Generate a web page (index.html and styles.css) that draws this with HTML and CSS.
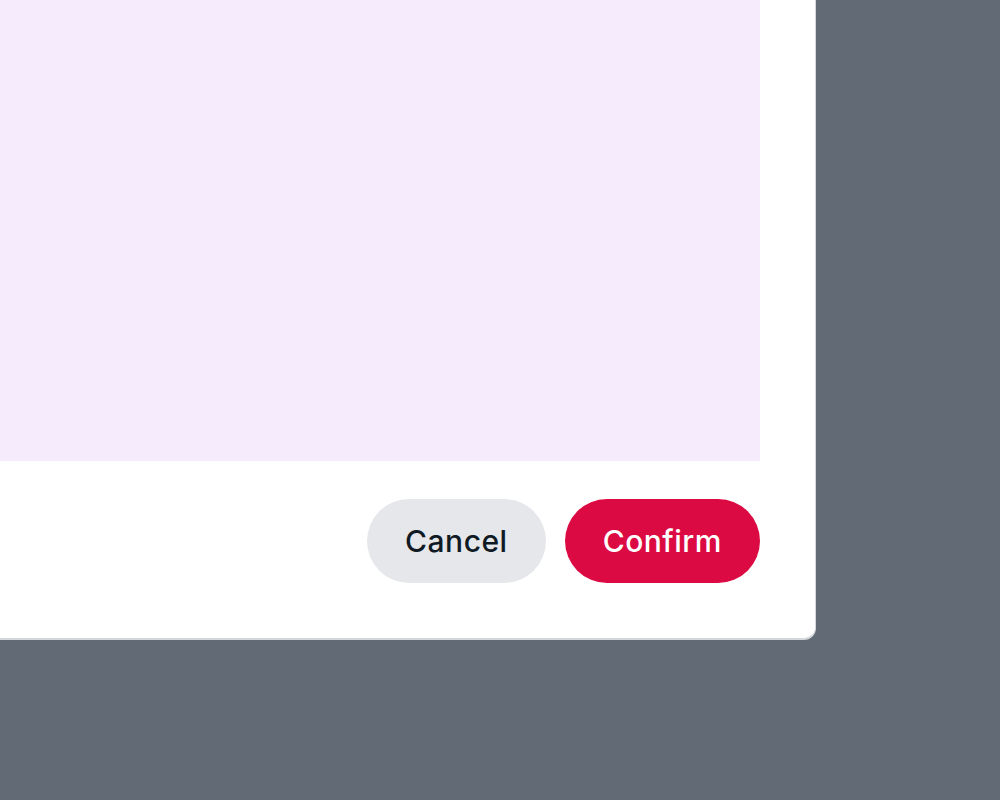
FILE: index.html
```html
<!DOCTYPE html>
<html lang="en">
<head>
<meta charset="utf-8">
<title>Confirm dialog</title>
<link rel="stylesheet" href="styles.css">
</head>
<body>
<div class="dialog">
  <div class="dialog-body"></div>
  <div class="dialog-actions">
    <button class="btn btn-secondary" type="button">Cancel</button>
    <button class="btn btn-primary" type="button">Confirm</button>
  </div>
</div>
</body>
</html>
```

FILE: styles.css
```css
html, body {
  margin: 0;
  padding: 0;
}
body {
  background: #626b75;
  width: 1000px;
  height: 800px;
  overflow: hidden;
  font-family: Inter, "Noto Sans", sans-serif;
}
.dialog {
  box-sizing: border-box;
  width: 872px;
  margin: -56px 0 0 -56px;
  padding: 56px 55px 55px 56px;
  background: #ffffff;
  border-right: 1px solid #d4d8dc;
  border-bottom: 2px solid #d4d8dc;
  border-radius: 0 0 12px 0;
  display: flex;
  flex-direction: column;
  gap: 38px;
}
.dialog-body {
  height: 461px;
  background: #f6ebfd;
}
.dialog-actions {
  display: flex;
  justify-content: flex-end;
  gap: 19px;
}
.btn {
  height: 84px;
  border: none;
  border-radius: 42px;
  padding: 0 38px;
  font-family: inherit;
  font-size: 30px;
  font-weight: 500;
  letter-spacing: 0.5px;
  cursor: pointer;
}
.btn-secondary {
  background: #e5e7ea;
  color: #0f1a24;
}
.btn-primary {
  background: #dc0a43;
  color: #ffffff;
}
```
